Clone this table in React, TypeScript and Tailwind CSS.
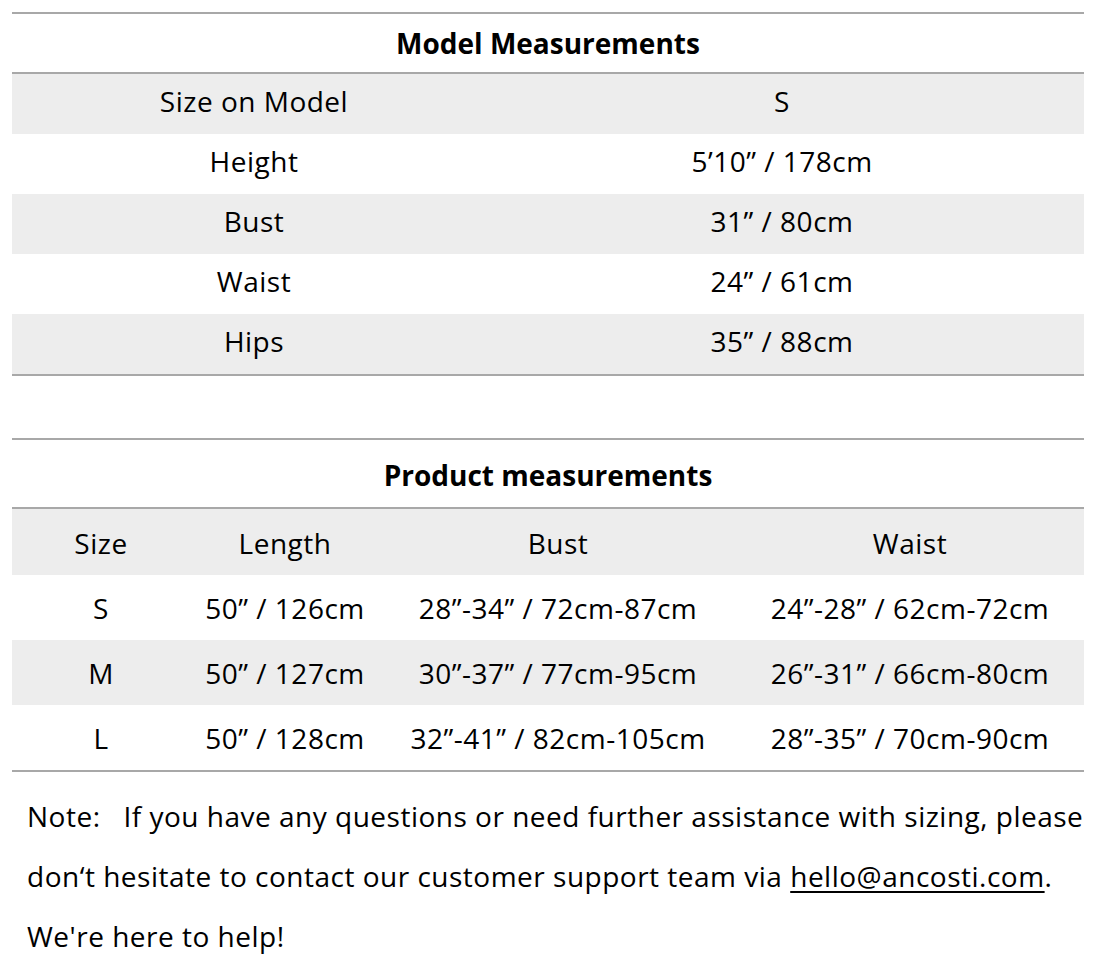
import React from "react";

const modelRows = [
  { label: "Size on Model", value: "S" },
  { label: "Height", value: "5’10” / 178cm" },
  { label: "Bust", value: "31” / 80cm" },
  { label: "Waist", value: "24” / 61cm" },
  { label: "Hips", value: "35” / 88cm" },
];

const productRows = [
  { size: "S", length: "50” / 126cm", bust: "28”-34” / 72cm-87cm", waist: "24”-28” / 62cm-72cm" },
  { size: "M", length: "50” / 127cm", bust: "30”-37” / 77cm-95cm", waist: "26”-31” / 66cm-80cm" },
  { size: "L", length: "50” / 128cm", bust: "32”-41” / 82cm-105cm", waist: "28”-35” / 70cm-90cm" },
];

const cols = "grid grid-cols-[178px_190px_356px_1fr]";

const App: React.FC = () => {
  return (
    <div
      className="w-[1096px] h-[964px] bg-white text-black pt-[12px] px-[12px] text-[28px] tracking-[0.5px]"
      style={{ fontFamily: "'Open Sans', Lato, sans-serif" }}
    >
      {/* model table */}
      <div className="w-[1072px]">
        <div className="border-t-2 border-[#a8a8a8] h-[60px] flex items-center justify-center font-bold tracking-normal">
          Model Measurements
        </div>
        <div className="border-t-2 border-b-2 border-[#a8a8a8]">
          {modelRows.map((r, i) => (
            <div
              key={r.label}
              className={`grid grid-cols-[484px_1fr] h-[60px] pb-[6px] items-center ${i % 2 === 0 ? "bg-[#ededed]" : "bg-white"}`}
            >
              <span className="text-center">{r.label}</span>
              <span className="text-center pr-[16px]">{r.value}</span>
            </div>
          ))}
        </div>
      </div>

      {/* product table */}
      <div className="w-[1072px] mt-[62px]">
        <div className="border-t-2 border-[#a8a8a8] h-[69px] pt-[2px] flex items-center justify-center font-bold tracking-normal">
          Product measurements
        </div>
        <div className="border-t-2 border-b-2 border-[#a8a8a8]">
          <div className={`${cols} h-[66px] pt-[2px] items-center bg-[#ededed] text-center`}>
            <span>Size</span>
            <span>Length</span>
            <span>Bust</span>
            <span>Waist</span>
          </div>
          {productRows.map((r, i) => (
            <div
              key={r.size}
              className={`${cols} h-[65px] items-center text-center ${i % 2 === 1 ? "bg-[#ededed]" : "bg-white"}`}
            >
              <span>{r.size}</span>
              <span className="whitespace-nowrap">{r.length}</span>
              <span className="whitespace-nowrap">{r.bust}</span>
              <span className="whitespace-nowrap">{r.waist}</span>
            </div>
          ))}
        </div>
      </div>

      {/* note */}
      <p className="mt-[14px] pl-[15px] leading-[60px] whitespace-nowrap">
        Note:<span className="inline-block w-[23px]" />If you have any questions or need further assistance with sizing, please
        <br />
        don‘t hesitate to contact our customer support team via{" "}
        <span className="underline underline-offset-4">hello@ancosti.com</span>.
        <br />
        We're here to help!
      </p>
    </div>
  );
};

export default App;
